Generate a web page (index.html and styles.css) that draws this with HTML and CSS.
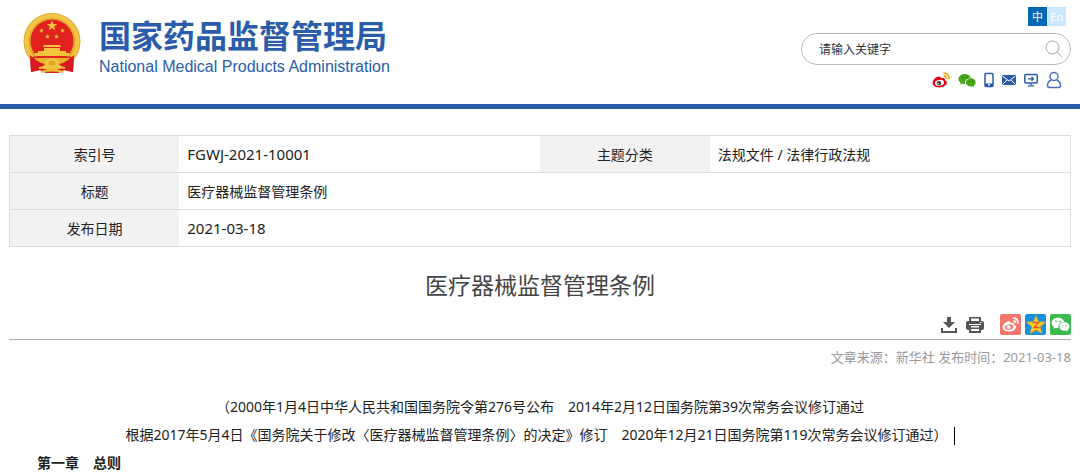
FILE: index.html
```html
<!DOCTYPE html>
<html lang="zh-CN">
<head>
  <meta charset="UTF-8">
  <title>医疗器械监督管理条例</title>
  <link rel="stylesheet" href="styles.css">
</head>
<body>

  <svg class="defs" aria-hidden="true">
    <symbol id="star" viewBox="0 0 20 20">
      <path d="M10 0.5l2.400 6.700 7.100.2-5.600 4.400 2 6.900-5.900-4.100-5.900 4.100 2-6.900L.5 7.400l7.100-.2z"/>
    </symbol>
    <symbol id="wechat" viewBox="0 0 20 16">
      <path d="M7.500.8C3.500.8.5 3.300.5 6.400c0 1.800 1 3.300 2.600 4.300l-.7 2 2.400-1.200c.9.300 2 .4 3 .4-.9-3.700 2-6.700 6.300-6.700C13.500 2.600 10.900.8 7.500.8z"/>
      <path d="M19.600 10.100c0-2.500-2.400-4.500-5.400-4.500s-5.400 2-5.400 4.500 2.400 4.500 5.400 4.500c.7 0 1.300-.1 1.900-.3l1.900 1-.5-1.700c1.300-.8 2.100-2 2.100-3.500z"/>
      <g class="eye">
        <circle cx="5.200" cy="4.600" r=".9"/><circle cx="9.600" cy="4.600" r=".9"/>
        <circle cx="12.500" cy="8.900" r=".7"/><circle cx="16" cy="8.900" r=".7"/>
      </g>
    </symbol>
    <symbol id="weibo" viewBox="0 0 20 18">
      <path class="body" d="M7.500 5C5 5 .5 8.800.5 12.300c0 3 3.500 5 7.500 5 5 0 8.600-2.600 8.600-5.400 0-1.600-1.200-2.300-2.300-2.600.7-1.900-.6-3.300-4.300-2C10.200 5.800 9.200 5 7.500 5z"/>
      <ellipse class="white" cx="8.200" cy="12.200" rx="5.200" ry="3.300" transform="rotate(-8 8.200 12.200)"/>
      <circle class="pupil" cx="7.600" cy="12.500" r="2.500"/>
      <circle class="white" cx="6.800" cy="13.100" r=".9"/>
      <g class="wave">
        <path d="M12.500 1.500c4-.9 7.300 2.500 6.100 6.500"/>
        <path d="M13.200 4.500c1.800-.3 3 1.100 2.500 2.800"/>
      </g>
    </symbol>
  </svg>

  <header class="header">
    <a class="logo" href="#">
      <svg class="emblem" viewBox="0 0 58 62" aria-hidden="true">
        <path fill="#d71a1d" d="M7 43h44l-1 17-9-2-6 3H23l-6-3-9 2z"/>
        <circle cx="29" cy="29.500" r="28.500" fill="#e3a92e"/>
        <circle cx="29" cy="29.500" r="25.500" fill="none" stroke="#f2c544" stroke-width="4"/>
        <circle cx="29" cy="29" r="21.500" fill="#e2231d"/>
        <g fill="#f3c53c">
          <use href="#star" x="23" y="8" width="12" height="11"/>
          <use href="#star" x="16" y="16" width="5" height="5"/>
          <use href="#star" x="37" y="16" width="5" height="5"/>
          <use href="#star" x="22" y="22" width="5" height="5"/>
          <use href="#star" x="31" y="22" width="5" height="5"/>
          <path d="M20 35l1-2h16l1 2zM21 36h16v3H21zM15 39h28v2H15zM12 41h34v3H12z"/>
        </g>
        <path fill="#e2231d" d="M10 44.500h38v1.500H10z"/>
        <path fill="#e9b22d" d="M10 46h38l-7 7H17z"/>
        <path fill="#d71a1d" d="M7 43c5 4 9 8 15 9l-4 4 3 5-4-3-9 2zM51 43c-5 4-9 8-15 9l4 4-3 5 4-3 9 2z"/>
        <ellipse cx="29" cy="51" rx="7" ry="5" fill="#f3c53c"/>
        <ellipse cx="29" cy="51" rx="3.500" ry="2.500" fill="#e2a325"/>
        <path fill="none" stroke="#f3c53c" stroke-width="2" d="M16 56c5-1 8 0 10 2M42 56c-5-1-8 0-10 2M18 60c5-2 17-2 22 0"/>
      </svg>
      <span class="logo-text">
        <span class="logo-cn">国家药品监督管理局</span>
        <span class="logo-en">National Medical Products Administration</span>
      </span>
    </a>

    <div class="header-side">
      <div class="lang">
        <a class="active" href="#">中</a>
        <a href="#">En</a>
      </div>
      <form class="search">
        <input type="text" placeholder="请输入关键字" aria-label="请输入关键字">
        <button type="button" aria-label="搜索">
          <svg viewBox="0 0 18 18" width="18" height="18"><circle cx="7.500" cy="7.500" r="6.500"/><path d="M12.200 12.200l5 5"/></svg>
        </button>
      </form>
      <div class="links">
        <a href="#" aria-label="微博"><svg class="weibo" width="18" height="16"><use href="#weibo"/></svg></a>
        <a href="#" aria-label="微信"><svg class="wechat" width="18" height="15"><use href="#wechat"/></svg></a>
        <a href="#" aria-label="手机"><svg viewBox="0 0 10 16" width="10" height="16"><rect x="1" y="1.500" width="8" height="13" rx="1" fill="none" stroke="#2a5caa" stroke-width="1.500"/><path d="M1 11.500h8V14H1z" fill="#2a5caa"/><path d="M4 12.300h2v1.200H4z" fill="#fff"/></svg></a>
        <a href="#" aria-label="邮箱"><svg viewBox="0 0 14 10" width="14" height="10"><path fill="#2a5caa" d="M0 0h14v10H0z"/><path d="M.5 1L7 6l6.500-5M.5 9.500L5 5M13.500 9.500L9 5" fill="none" stroke="#fff"/></svg></a>
        <a href="#" aria-label="电脑"><svg viewBox="0 0 14 14" width="14" height="14"><rect x=".8" y="1.500" width="12.400" height="8.500" rx="1" fill="none" stroke="#2a5caa" stroke-width="1.500"/><path d="M4 5.800h5M7.500 3.800l2 2-2 2M7 10v2M4 12.800h6" fill="none" stroke="#2a5caa" stroke-width="1.300"/></svg></a>
        <a class="user" href="#" aria-label="用户"><svg viewBox="0 0 16 18" width="16" height="18"><circle cx="8" cy="5.500" r="4"/><path d="M5.500 9C3 10 1.500 12 1.500 14.500c0 1.500.5 2 2 2h9c1.500 0 2-.5 2-2 0-2.500-1.500-4.500-4-5.500"/></svg></a>
      </div>
    </div>
  </header>

  <main class="main">
    <table class="info">
      <tr>
        <th scope="row">索引号</th>
        <td class="num">FGWJ-2021-10001</td>
        <th scope="row">主题分类</th>
        <td>法规文件 / 法律行政法规</td>
      </tr>
      <tr>
        <th scope="row">标题</th>
        <td colspan="3">医疗器械监督管理条例</td>
      </tr>
      <tr>
        <th scope="row">发布日期</th>
        <td class="num" colspan="3">2021-03-18</td>
      </tr>
    </table>

    <h1>医疗器械监督管理条例</h1>

    <div class="tools">
      <button type="button" aria-label="下载">
        <svg viewBox="0 0 16 16" width="16" height="16"><path fill="#555" d="M6 0h4v5h4l-6 6-6-6h4zM0 11h2v3h12v-3h2v5H0z"/></svg>
      </button>
      <button class="print" type="button" aria-label="打印">
        <svg viewBox="0 0 18 16" width="18" height="16"><path fill="#555" d="M3 0h12v4H3z"/><path fill="#fff" d="M5 1.500h8V4H5z"/><rect y="4" width="18" height="9" rx="2" fill="#555"/><path fill="#fff" d="M3 7h12v1H3zM14 5h1.500v1H14z"/><path fill="#555" d="M3 8h12v8H3z"/><path fill="#fff" d="M5 9h8v1.500H5zM5 12h8v2H5z"/></svg>
      </button>
      <a class="share share-weibo" href="#" aria-label="分享到微博"><svg class="weibo" width="17" height="15"><use href="#weibo"/></svg></a>
      <a class="share share-qzone" href="#" aria-label="分享到QQ空间">
        <svg viewBox="0 0 20 20" width="20" height="20"><path fill="#ffca28" stroke="#e39a1b" stroke-width=".6" d="M10 .5l2.500 6.300 7 .4-5.300 4.500 1.700 6.800-5.900-3.600-5.900 3.600 1.700-6.800L.5 7.200l7-.4z"/><path d="M6.500 7.500h6l-4.500 5h5.500" fill="none" stroke="#d9611d" stroke-width="1.300"/></svg>
      </a>
      <a class="share share-wechat" href="#" aria-label="分享到微信"><svg class="wechat" width="19" height="15"><use href="#wechat"/></svg></a>
    </div>

    <p class="source">文章来源：新华社 发布时间：2021-03-18</p>

    <article class="content">
      <p class="center">（2000年1月4日中华人民共和国国务院令第276号公布　2014年2月12日国务院第39次常务会议修订通过</p>
      <p class="center">根据2017年5月4日《国务院关于修改〈医疗器械监督管理条例〉的决定》修订　2020年12月21日国务院第119次常务会议修订通过）<span class="caret"></span></p>
      <p class="chapter">第一章　总则</p>
    </article>
  </main>

</body>
</html>
```

FILE: styles.css
```css
* {
  box-sizing: border-box;
}

body {
  margin: 0;
  background: #fff;
  color: #222;
  font-family: "Noto Sans", "Noto Sans CJK SC", sans-serif;
  font-size: 14px;
}

a {
  text-decoration: none;
}

button {
  padding: 0;
  border: none;
  background: none;
  cursor: pointer;
}

svg {
  display: block;
}

.defs {
  display: none;
}

/* header */
.header {
  display: flex;
  justify-content: space-between;
  padding: 7px 9px 15px 23px;
  border-bottom: 5px solid #2a5caa;
}

.logo {
  display: flex;
  align-items: flex-start;
  gap: 18px;
  padding-top: 5px;
  color: #2a5caa;
}

.emblem {
  width: 58px;
  height: 62px;
}

.logo-text {
  display: flex;
  flex-direction: column;
  padding-top: 4px;
}

.logo-cn {
  font-size: 32px;
  font-weight: bold;
  line-height: 40px;
}

.logo-en {
  font-family: "Liberation Sans", sans-serif;
  font-size: 16px;
  line-height: 22px;
}

.header-side {
  display: flex;
  flex-direction: column;
  align-items: flex-end;
  width: 270px;
}

.lang {
  display: flex;
  margin-right: 5px;
}

.lang a {
  width: 19px;
  background: #cce8ff;
  color: #fff;
  font-size: 11px;
  line-height: 19px;
  text-align: center;
}

.lang .active {
  background: #0068b7;
}

.search {
  display: flex;
  align-items: center;
  width: 100%;
  height: 32px;
  margin-top: 7px;
  padding: 0 7px 0 17px;
  border: 1px solid #bbb;
  border-radius: 16px;
}

.search input {
  flex: 1;
  min-width: 0;
  padding: 0;
  border: none;
  outline: none;
  background: none;
  font-family: inherit;
  font-size: 12px;
}

.search input::placeholder {
  color: #333;
}

.search svg {
  fill: none;
  stroke: #aaa;
}

.links {
  display: flex;
  align-items: center;
  gap: 8px;
  margin: 6px 9px 0 0;
}

.weibo {
  --white: #fff;
  color: #f5a623;
  fill: #e60012;
}

.body {
  fill: inherit;
}

.white {
  fill: var(--white);
}

.pupil {
  fill: var(--pupil, #333);
}

.wave {
  fill: none;
  stroke: currentColor;
  stroke-width: 2;
}

.wechat {
  fill: #46a817;
}

.eye {
  fill: var(--eye, #1f6d05);
}

.user svg {
  fill: none;
  stroke: #4a6fb5;
  stroke-width: 1.5;
}

/* document info */
.main {
  padding: 26px 9px 0;
}

.info {
  width: 100%;
  border: 1px solid #ddd;
  border-collapse: collapse;
  table-layout: fixed;
}

.info tr {
  height: 37px;
  border-bottom: 1px solid #ddd;
}

.info th {
  width: 16%;
  padding: 0;
  background: #f2f2f2;
  font-weight: normal;
}

.info td {
  padding: 0 8px;
}

.info .num {
  font-size: 15px;
}

h1 {
  margin: 22px 0 13px;
  color: #444;
  font-size: 23px;
  font-weight: normal;
  line-height: 32px;
  text-align: center;
}

.tools {
  display: flex;
  align-items: center;
  justify-content: flex-end;
  gap: 4px;
  padding-bottom: 4px;
  border-bottom: 1px solid #aaa;
}

.print {
  margin: 0 12px 0 5px;
}

.share {
  display: flex;
  align-items: center;
  justify-content: center;
  width: 21px;
  height: 21px;
  border-radius: 2px;
}

.share-weibo {
  background: #f5776c;
}

.share-weibo .weibo {
  --white: #f5776c;
  --pupil: #fff;
  fill: #fff;
  color: #fff;
}

.share-qzone {
  background: #1691e0;
}

.share-wechat {
  background: #3eb94e;
}

.share-wechat .wechat {
  --eye: #3eb94e;
  fill: #fff;
}

.source {
  margin: 7px 0 26px;
  color: #999;
  font-size: 13px;
  line-height: 20px;
  text-align: right;
}

.content p {
  margin: 0;
  line-height: 28px;
}

.content .center {
  text-align: center;
}

.content .chapter {
  text-indent: 2em;
  font-weight: bold;
}

.caret {
  display: inline-block;
  width: 1px;
  height: 18px;
  margin-left: 6px;
  background: #000;
  vertical-align: middle;
}
```
